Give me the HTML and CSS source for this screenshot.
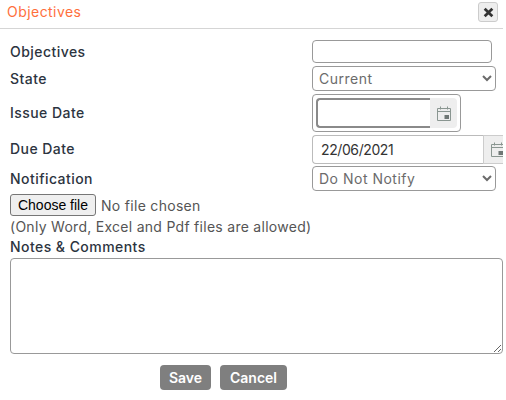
FILE: index.html
```html
<!DOCTYPE html>
<html lang="en">
<head>
    <meta charset="UTF-8">
    <meta name="viewport" content="width=device-width, initial-scale=1.0">
    <title>Objectives</title>
    <link rel="stylesheet" href="styles.css">
</head>
<body class="body">
    <div class="dialog">
        <div class="head">
            <span class="title">Objectives</span>
            <button class="close" type="button">
                <svg width="11" height="11" viewBox="0 0 11 11"><path d="M2.6 .8 5.5 3.6 8.4 .8 10.3 2.7 7.4 5.5 10.3 8.3 8.4 10.2 5.5 7.4 2.6 10.2 .7 8.3 3.6 5.5 .7 2.7Z" fill="#333"/></svg>
            </button>
        </div>

        <form class="form">
            <div class="row row-obj">
                <label class="lbl">Objectives</label>
                <input class="txt" type="text">
            </div>
            <div class="row row-state">
                <label class="lbl">State</label>
                <select class="sel"><option>Current</option></select>
            </div>
            <div class="row row-issue">
                <label class="lbl lbl-date">Issue Date</label>
                <div class="picker">
                    <input class="date-focus" type="text">
                    <span class="addon">
                        <svg class="cal" width="16" height="17" viewBox="0 0 16 17"><path d="M1.5 3.5h13v12h-13zM1.5 6.5h13M4.5 1.5v3M11.5 1.5v3" fill="none" stroke="#8a9691"/><rect x="8.5" y="10" width="4.5" height="4" fill="#6f7775"/></svg>
                    </span>
                </div>
            </div>
            <div class="row row-due">
                <label class="lbl lbl-date">Due Date</label>
                <div class="due">
                    <input class="date" type="text" value="22/06/2021">
                    <span class="addon addon-due">
                        <svg class="cal" width="16" height="17" viewBox="0 0 16 17"><path d="M1.5 3.5h13v12h-13zM1.5 6.5h13M4.5 1.5v3M11.5 1.5v3" fill="none" stroke="#8a9691"/><rect x="8.5" y="10" width="4.5" height="4" fill="#6f7775"/></svg>
                    </span>
                </div>
            </div>
            <div class="row row-notify">
                <label class="lbl">Notification</label>
                <select class="sel"><option>Do Not Notify</option></select>
            </div>

            <div class="file">
                <button class="file-btn" type="button">Choose file</button>
                <span class="file-name">No file chosen</span>
            </div>
            <div class="hint">(Only Word, Excel and Pdf files are allowed)</div>
            <label class="lbl lbl-notes">Notes &amp; Comments</label>
            <textarea class="notes"></textarea>

            <div class="actions">
                <button class="btn btn-save" type="button">Save</button>
                <button class="btn btn-cancel" type="button">Cancel</button>
            </div>
        </form>
    </div>
</body>
</html>
```

FILE: styles.css
```css
.body{
    margin: 0;
    background-color: #fff;
    font-family: Inter, "Open Sans", sans-serif;
    color: #2c3440;
    overflow: hidden;
}
.dialog{
    width: 503px;
    height: 400px;
    overflow: hidden;
}
.head{
    display: flex;
    justify-content: space-between;
    align-items: flex-start;
    height: 26px;
    padding: 2px 5px 0 7px;
    border-bottom: 1px solid #d5d5d5;
}
.title{
    color: #ff6f3c;
    font-size: 14px;
    line-height: 20px;
    letter-spacing: .45px;
}
.close{
    display: flex;
    align-items: center;
    justify-content: center;
    width: 20px;
    height: 20px;
    padding: 0;
    border: 1px solid #ccc;
    border-radius: 3px;
    background-color: #eee;
}
.form{
    padding: 11px 0 0 10px;
}
.row{
    display: grid;
    grid-template-columns: 302px auto;
    align-items: center;
    justify-content: start;
}
.lbl{
    font-size: 14px;
    font-weight: 450;
    letter-spacing: .45px;
    color: #2c3440;
}
.lbl-date{
    padding-bottom: 2px;
}
.row-state{
    margin-top: 3px;
}
.row-issue{
    margin-top: 3px;
}
.row-due{
    margin-top: 3px;
}
.row-notify{
    margin-top: 2px;
}
.txt{
    width: 180px;
    height: 23px;
    box-sizing: border-box;
    border: 1px solid #999;
    border-radius: 4px;
}
.sel{
    width: 184px;
    height: 25px;
    box-sizing: border-box;
    border: 1px solid #999;
    border-radius: 4px;
    background-color: #fff;
    padding-left: 2px;
    font-family: inherit;
    font-size: 14px;
    letter-spacing: .5px;
    color: #6b6b6b;
}
.picker{
    display: flex;
    width: 149px;
    height: 38px;
    box-sizing: border-box;
    padding: 3px;
    border: 1px solid #999;
    border-radius: 4px;
}
.date-focus{
    width: 114px;
    height: 30px;
    box-sizing: border-box;
    border: 2px solid #8a8a8a;
    border-right: none;
    border-radius: 4px 0 0 4px;
    background-color: #fff;
}
.addon{
    display: flex;
    align-items: center;
    justify-content: center;
    width: 28px;
    background-color: #eee;
    border-radius: 0 4px 4px 0;
}
.due{
    display: flex;
    width: 191px;
    height: 29px;
}
.date{
    width: 171px;
    height: 29px;
    flex: none;
    box-sizing: border-box;
    border: 1px solid #bbb;
    border-right: none;
    border-radius: 4px 0 0 4px;
    padding-left: 8px;
    font-family: inherit;
    font-size: 14px;
    letter-spacing: -.4px;
    color: #333;
}
.addon-due{
    flex: none;
    border: 1px solid #ccc;
    border-radius: 0;
}
.file{
    display: flex;
    align-items: center;
    gap: 5px;
    margin-top: 3px;
    height: 22px;
}
.file-btn{
    width: 86px;
    height: 22px;
    padding: 0;
    border: 1px solid #767676;
    border-radius: 3px;
    background-color: #efefef;
    color: #000;
    font-family: "Liberation Sans", sans-serif;
    font-size: 14px;
}
.file-name{
    font-size: 14px;
    letter-spacing: .3px;
    color: #555;
}
.hint{
    margin-top: 2px;
    font-size: 14px;
    line-height: 18px;
    letter-spacing: .28px;
    color: #555;
}
.lbl-notes{
    display: block;
    margin-top: 2px;
    line-height: 18px;
}
.notes{
    display: block;
    width: 493px;
    height: 96px;
    margin-top: 2px;
    box-sizing: border-box;
    border: 1px solid #999;
    border-radius: 4px;
}
.actions{
    display: flex;
    gap: 9px;
    margin: 11px 0 0 150px;
}
.btn{
    height: 25px;
    padding: 0;
    border: none;
    border-radius: 4px;
    background-color: #7f7f7f;
    color: #fff;
    font-family: inherit;
    font-size: 14px;
    font-weight: 600;
}
.btn-save{
    width: 51px;
}
.btn-cancel{
    width: 67px;
}
```
